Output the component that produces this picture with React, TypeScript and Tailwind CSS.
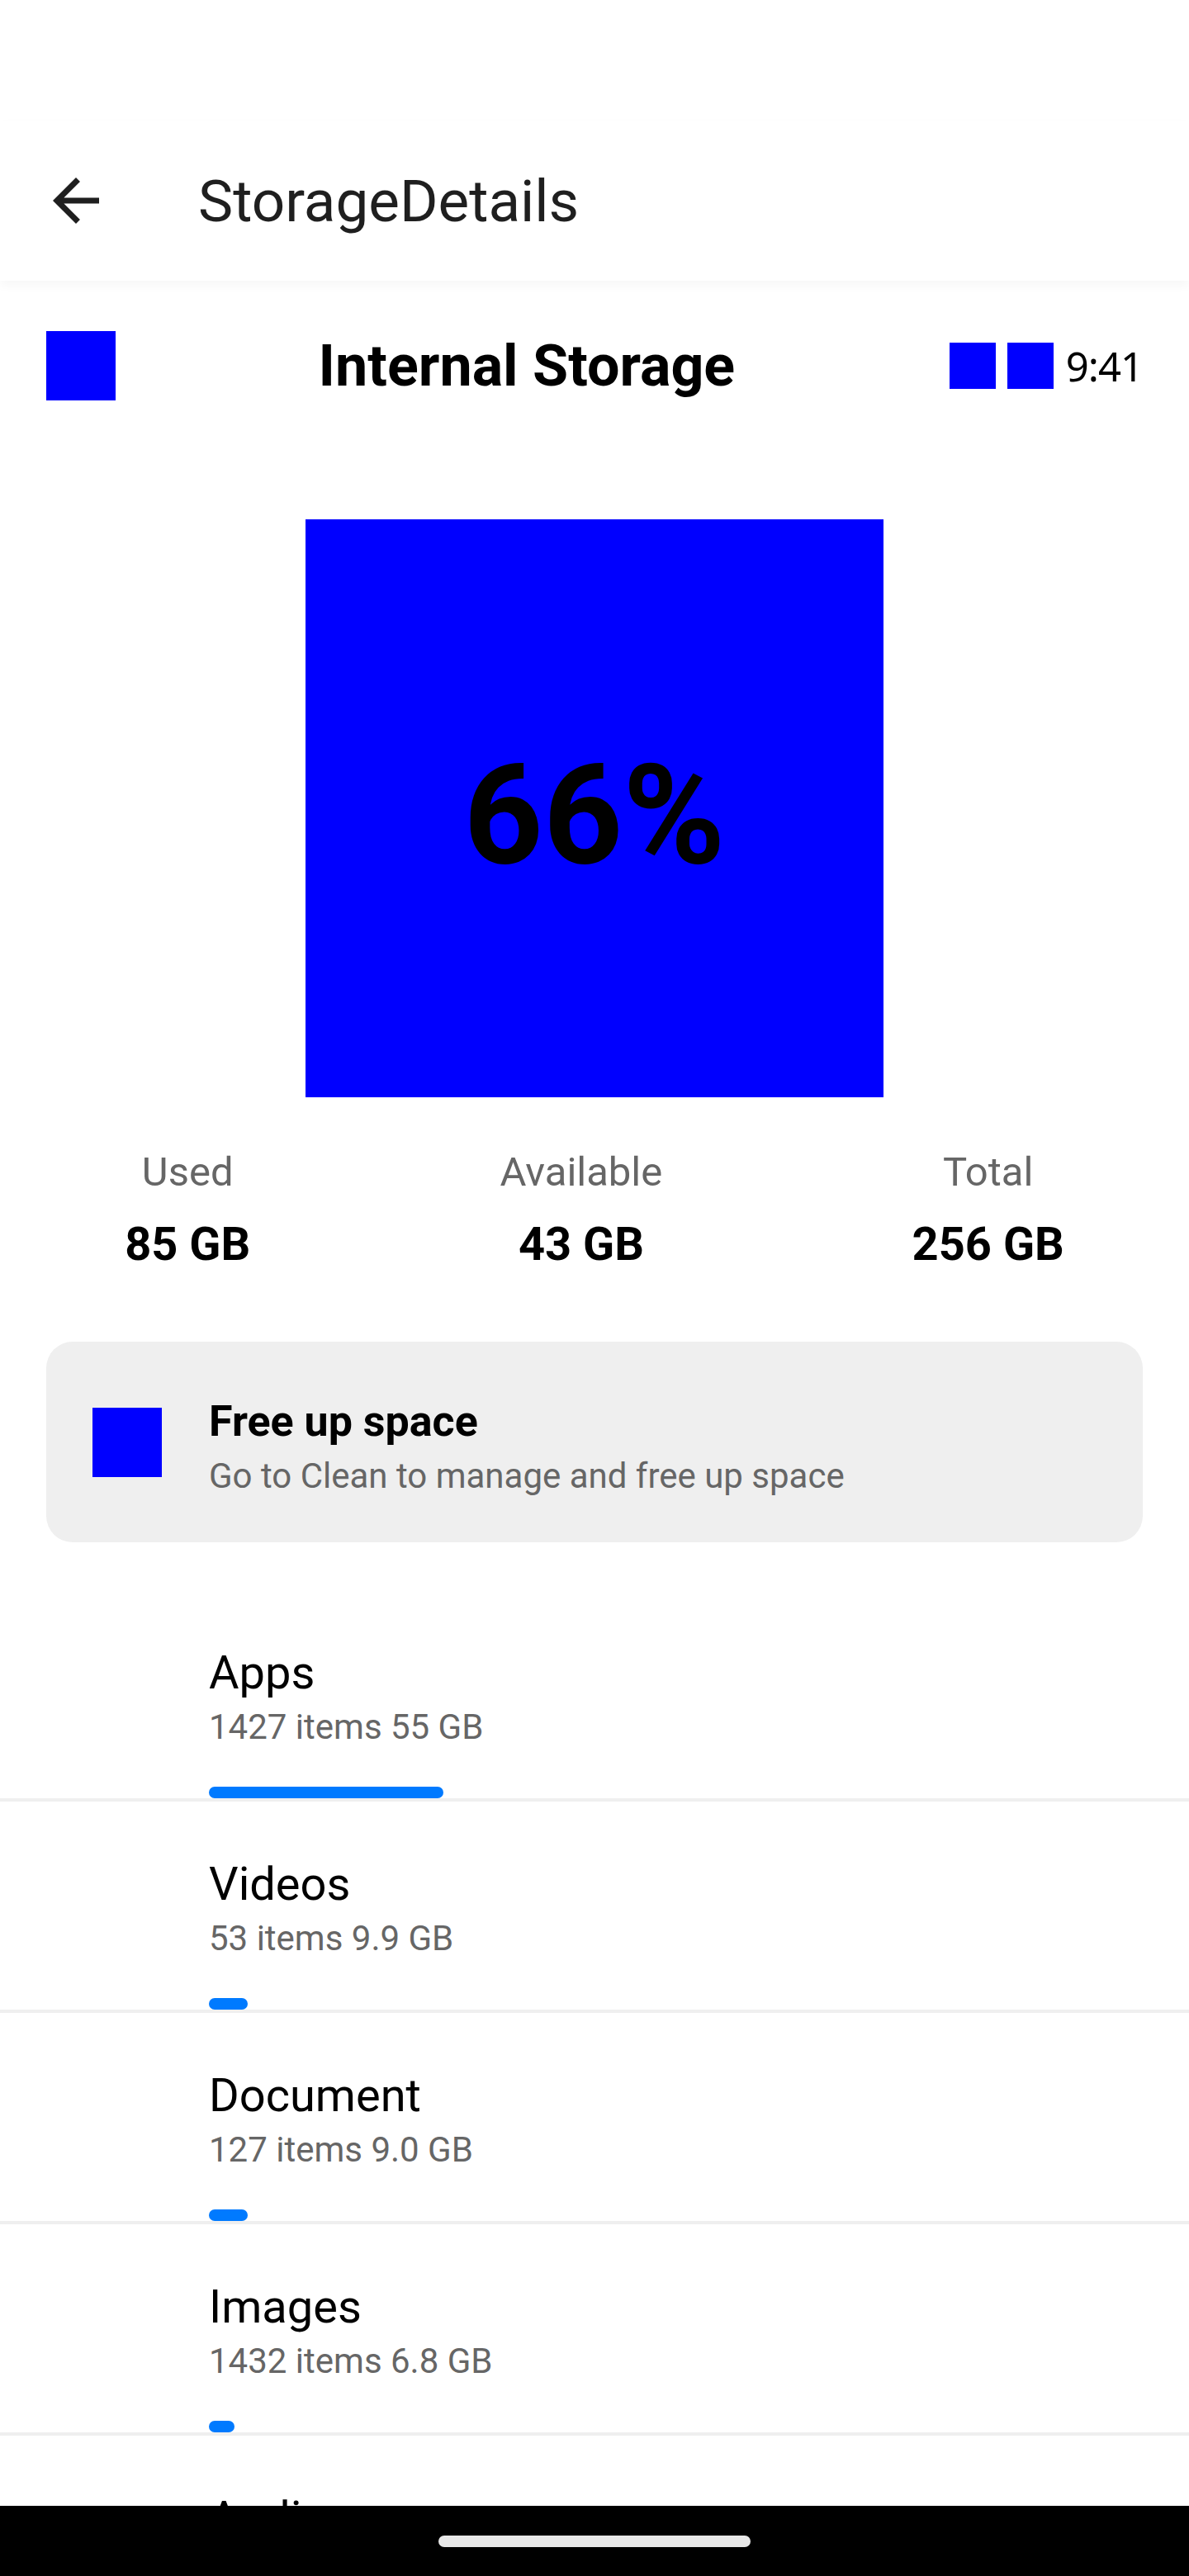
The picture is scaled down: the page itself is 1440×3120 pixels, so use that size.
import React from "react";

const categories = [
  { name: "Apps", info: "1427 items 55 GB", bar: 284 },
  { name: "Videos", info: "53 items 9.9 GB", bar: 47 },
  { name: "Document", info: "127 items 9.0 GB", bar: 47 },
  { name: "Images", info: "1432 items 6.8 GB", bar: 31 },
  { name: "Audio", info: "318 items 2.1 GB", bar: 24 },
];

const stats = [
  { label: "Used", value: "85 GB" },
  { label: "Available", value: "43 GB" },
  { label: "Total", value: "256 GB" },
];

const BackArrow = () => (
  <svg viewBox="0 0 24 24" className="w-[84px] h-[84px]" fill="#1f1f1f">
    <path d="M20 11H7.83l5.59-5.59L12 4l-8 8 8 8 1.41-1.41L7.83 13H20v-2z" />
  </svg>
);

export default function App() {
  return (
    <div className="w-[1440px] h-[3120px] flex flex-col bg-white font-['Roboto',sans-serif] overflow-hidden">
      <div className="flex-1 overflow-hidden">
        {/* status bar space */}
        <div className="h-[146px]" />

        {/* app bar */}
        <div className="relative z-10 h-[194px] flex items-center bg-white shadow-[0_6px_12px_rgba(0,0,0,0.035)]">
          <button className="ml-[50px] w-[84px] h-[84px] flex items-center justify-center">
            <BackArrow />
          </button>
          <h1 className="ml-[106px] mt-[2px] text-[71px] leading-[84px] text-[#1f1f1f]">StorageDetails</h1>
        </div>

        {/* storage header */}
        <div className="mt-[61px] px-[56px] flex items-center h-[84px]">
          <div className="w-[84px] h-[84px] bg-[#0000ff]" />
          <div className="flex-1 pr-[14px] text-center text-[70px] leading-[84px] font-bold text-black">
            Internal Storage
          </div>
          <div className="flex items-center gap-[14px]">
            <div className="w-[56px] h-[56px] bg-[#0000ff]" />
            <div className="w-[56px] h-[56px] bg-[#0000ff]" />
            <span className="ml-[1px] font-['Noto_Sans',sans-serif] text-[49px] leading-[56px] tracking-[-1px] text-black">
              9:41
            </span>
          </div>
        </div>

        {/* usage chart */}
        <div className="mt-[144px] flex justify-center">
          <div className="w-[700px] h-[700px] bg-[#0000ff] flex items-center justify-center">
            <span className="mt-[18px] text-[168px] leading-none font-bold text-black">66%</span>
          </div>
        </div>

        {/* used / available / total */}
        <div className="mt-[62px] flex justify-around">
          {stats.map((s) => (
            <div key={s.label} className="flex flex-col items-center">
              <span className="text-[49px] leading-[58px] text-[#666666]">{s.label}</span>
              <span className="mt-[25px] text-[56px] leading-[66px] font-bold text-black">{s.value}</span>
            </div>
          ))}
        </div>

        {/* free up space card */}
        <div className="mt-[85px] mx-[56px] h-[243px] rounded-[32px] bg-[#efefef] flex items-center px-[56px]">
          <div className="w-[84px] h-[84px] bg-[#0000ff] shrink-0" />
          <div className="ml-[57px] mt-[11px] flex flex-col">
            <span className="text-[52px] leading-[62px] font-bold text-black">Free up space</span>
            <span className="mt-[10px] text-[42px] leading-[50px] text-[#666666]">
              Go to Clean to manage and free up space
            </span>
          </div>
        </div>

        {/* categories */}
        <div className="mt-[58px]">
          {categories.map((c) => (
            <div key={c.name}>
              <div className="h-[252px] flex flex-col pl-[253px] pt-[67px]">
                <span className="text-[56px] leading-[66px] text-black">{c.name}</span>
                <span className="mt-[8px] text-[42px] leading-[50px] text-[#666666]">{c.info}</span>
                <div className="mt-auto h-[14px] rounded-full bg-[#007aff]" style={{ width: c.bar }} />
              </div>
              <div className="h-[4px] bg-[#efefef]" />
            </div>
          ))}
        </div>
      </div>

      {/* navigation bar */}
      <div className="h-[85px] shrink-0 bg-black flex justify-center">
        <div className="mt-[36px] w-[378px] h-[14px] rounded-full bg-[#e8e8e8]" />
      </div>
    </div>
  );
}
